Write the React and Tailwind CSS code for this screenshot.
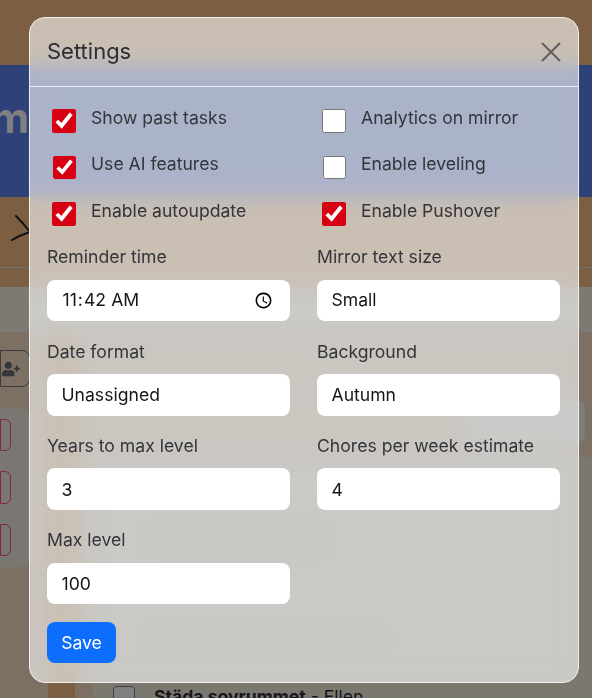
import { FaUserPlus } from 'react-icons/fa';

const checks = [
  { label: 'Show past tasks', checked: true, size: 'w-6 h-6 ml-[5px]' },
  { label: 'Analytics on mirror', checked: false, size: 'w-6 h-6 ml-[5px]' },
  { label: 'Use AI features', checked: true, size: 'w-[23px] h-[23px] ml-[5.5px] mr-[0.5px] mt-[0.6px]' },
  { label: 'Enable leveling', checked: false, size: 'w-[23px] h-[23px] ml-[5.5px] mr-[0.5px] mt-[0.6px]' },
  { label: 'Enable autoupdate', checked: true, size: 'w-6 h-6 ml-[5px]' },
  { label: 'Enable Pushover', checked: true, size: 'w-6 h-6 ml-[5px]' },
];

const inputClass =
  'block w-full h-[41.6px] rounded-lg bg-white px-[14.5px] text-[17.6px] text-[#14161a] outline-none appearance-none';

function Field({ label, children }) {
  return (
    <div>
      <label className="block text-[17.6px] leading-6 mb-[10.6px] text-[#33353a]">{label}</label>
      {children}
    </div>
  );
}

function Background() {
  return (
    <div className="flex flex-col h-[698px] overflow-hidden bg-[#7c5f42]">
      <div className="h-[65px] shrink-0" />
      <div className="h-[132px] shrink-0 bg-[#2f4179] flex items-start pt-[32px]">
        <div className="w-[29px] overflow-hidden flex justify-end">
          <span className="text-[42px] leading-none font-bold text-[#808080]">m</span>
        </div>
      </div>
      <div className="h-[71px] shrink-0 border-b border-[#6f7070] flex items-center pl-[11px]">
        <svg width="30" height="36" viewBox="0 0 30 36" fill="none" className="mt-[-2px]">
          <path d="M5 3 Q13 11 19 19 Q9 22 1 27" stroke="#141210" strokeWidth="2" strokeLinecap="round" />
        </svg>
      </div>
      <div className="h-[19px] shrink-0" />
      <div className="h-[45px] shrink-0 bg-[#7c7a72]" />
      <div className="flex-1 flex bg-[#7c7063]">
        {/* left column */}
        <div className="w-[48px] shrink-0 pt-[18px]">
          <div className="w-[30px] h-[37px] rounded-r-lg border border-[#3c3c3c] flex items-center justify-end pr-[9px]">
            <FaUserPlus className="w-[18px] h-[18px] text-[#33373c]" />
          </div>
          <div className="mt-[21px] w-[29px] h-[159px] rounded-r-lg bg-[#7a7772] flex flex-col gap-[20px] pt-[11px]">
            <div className="w-[11px] h-[32px] rounded-r-md border border-[#7d2a3c]" />
            <div className="w-[11px] h-[33px] rounded-r-md border border-[#7d2a3c]" />
            <div className="w-[11px] h-[32px] rounded-r-md border border-[#7d2a3c]" />
          </div>
        </div>
        <div className="w-[27px] shrink-0 bg-[#7c5f42]" />
        <div className="w-[18px] shrink-0" />
        {/* main column */}
        <div className="flex-1 flex flex-col">
          <div className="h-[125px] shrink-0 pt-[68px] flex justify-end">
            <div className="w-[120px] h-[42px] mr-[7px] rounded-lg bg-[#7c7f7c]" />
          </div>
          <div className="flex-1 bg-[#7b7870] pt-[74px] pl-[58px]">
            <div className="w-[170px] h-[16px] bg-[#706f6a]" />
            <div className="w-[230px] h-[16px] mt-[86px] bg-[#706f6a]" />
            <div className="flex items-center gap-[19px] mt-[35px] ml-[-38px]">
              <div className="w-[22px] h-[22px] rounded border border-[#3c3c3c] bg-[#808080] shrink-0" />
              <div className="text-[17.6px] text-[#16171a] whitespace-nowrap">
                <b>Städa sovrummet</b> - Ellen
              </div>
            </div>
          </div>
        </div>
      </div>
    </div>
  );
}

export default function App() {
  return (
    <div className="relative w-[592px] h-[698px] overflow-hidden font-[Inter,sans-serif]">
      <Background />

      <div className="absolute left-[29px] top-[17px] w-[550px] rounded-2xl border border-[#f2f0ec] bg-white/60 backdrop-blur-[10px] overflow-hidden">
        {/* Header */}
        <div className="h-[69px] flex items-center justify-between pl-[17px] pr-[17px] border-b border-[#e9ecf4]">
          <h1 className="text-[22px] text-[#2c2e33] mt-[-2px]">Settings</h1>
          <svg width="20" height="20" viewBox="0 0 20 20" fill="none" stroke="#5f5f5f" strokeWidth="2">
            <path d="M1 1 L19 19 M19 1 L1 19" />
          </svg>
        </div>

        <div className="pl-[17px] pr-[18px] pt-[22px] pb-[19px]">
          <div className="grid grid-cols-2 gap-x-[27px]">
            {checks.map((c) => (
              <div key={c.label} className="flex items-start h-[46.4px] gap-[15px]">
                <input type="checkbox" defaultChecked={c.checked} className={`${c.size} accent-[#d60012] m-0 shrink-0`} />
                <label className="text-[17.6px] leading-[20px] text-[#33353a] mt-[-1px]">{c.label}</label>
              </div>
            ))}
          </div>

          <div className="grid grid-cols-2 gap-x-[27px] gap-y-[18.1px] mt-[-2.9px]">
            <Field label="Reminder time">
              <input type="time" defaultValue="11:42" className={inputClass} />
            </Field>
            <Field label="Mirror text size">
              <select defaultValue="Small" className={inputClass}>
                <option>Small</option>
                <option>Medium</option>
                <option>Large</option>
              </select>
            </Field>
            <Field label="Date format">
              <select defaultValue="Unassigned" className={inputClass}>
                <option>Unassigned</option>
              </select>
            </Field>
            <Field label="Background">
              <select defaultValue="Autumn" className={inputClass}>
                <option>Autumn</option>
              </select>
            </Field>
            <Field label="Years to max level">
              <input type="number" defaultValue="3" className={inputClass} />
            </Field>
            <Field label="Chores per week estimate">
              <input type="number" defaultValue="4" className={inputClass} />
            </Field>
            <Field label="Max level">
              <input type="number" defaultValue="100" className={inputClass} />
            </Field>
          </div>

          <button className="mt-[18px] block w-[69px] h-[41px] rounded-lg bg-[#0d6efd] text-[17.6px] text-white">Save</button>
        </div>
      </div>
    </div>
  );
}
